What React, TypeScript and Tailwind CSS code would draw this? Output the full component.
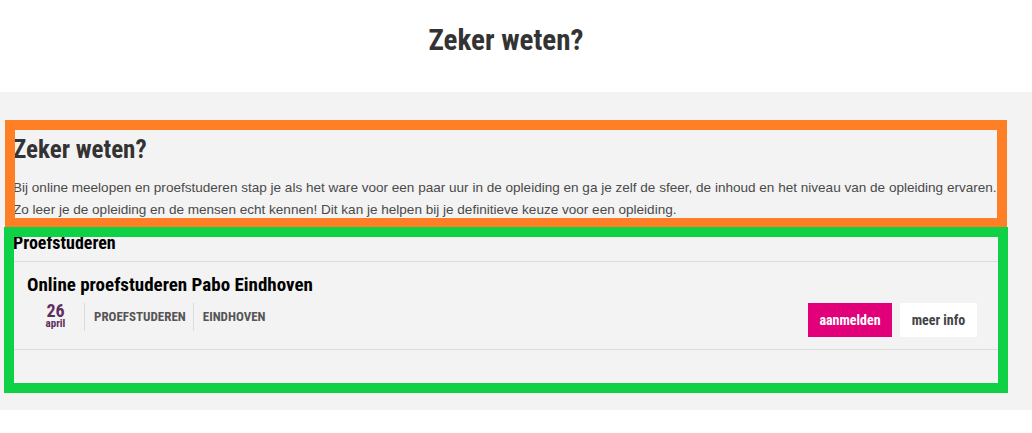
const App = () => {
  return (
    <main className="relative w-[1032px] bg-white font-['Liberation_Sans',Arial,sans-serif]">
      <header className="h-[92px] flex justify-center pt-[22px] pr-[20px]">
        <h1 className="font-['Roboto_Condensed',Roboto,sans-serif] font-bold text-[29px] leading-[36px] text-[#333]">
          Zeker weten?
        </h1>
      </header>

      <section className="relative h-[318px] bg-[#f3f3f3] pl-[13px] pr-[24px] pt-[43px]">
        <h2 className="font-['Roboto_Condensed',Roboto,sans-serif] font-bold text-[25px] leading-[30px] text-[#333]">
          Zeker weten?
        </h2>
        <p className="mt-[12px] text-[13.55px] leading-[22px] text-[#4a4a4a]">
          Bij online meelopen en proefstuderen stap je als het ware voor een paar uur in de opleiding en ga je zelf de sfeer, de inhoud en het niveau van de opleiding ervaren. Zo leer je de opleiding en de mensen echt kennen! Dit kan je helpen bij je definitieve keuze voor een opleiding.
        </p>

        <h3 className="mt-[11px] font-['Roboto_Condensed',Roboto,sans-serif] font-bold text-[18px] leading-[22px] text-black">
          Proefstuderen
        </h3>
        <div className="mt-[7px] mr-[10px] border-t border-b border-[#dcdcdc] pl-[14px] pr-[21px] pt-[11px] pb-[12px]">
          <h4 className="font-['Roboto_Condensed',Roboto,sans-serif] font-bold text-[19px] leading-[24px] text-black">
            Online proefstuderen Pabo Eindhoven
          </h4>
          <div className="mt-[6px] flex items-start justify-between">
            <div className="flex items-start font-['Roboto_Condensed',Roboto,sans-serif]">
              <div className="w-[57px] flex flex-col items-center text-[#5e2d5e] font-bold">
                <span className="text-[18px] leading-[15px]">26</span>
                <span className="text-[11px] leading-[11px]">april</span>
              </div>
              <div className="h-[28px] border-l border-[#dcdcdc] pl-[9px] pr-[7px] pt-[7px] text-[13px] leading-[14px] font-bold text-[#555] uppercase">
                Proefstuderen
              </div>
              <div className="h-[28px] border-l border-[#dcdcdc] pl-[9px] pt-[7px] text-[13px] leading-[14px] font-bold text-[#555] uppercase">
                Eindhoven
              </div>
            </div>
            <div className="flex gap-[8px] font-['Roboto_Condensed',Roboto,sans-serif] font-bold text-[14px]">
              <button className="h-[34px] w-[84px] bg-[#e2007a] text-white">aanmelden</button>
              <button className="h-[34px] w-[77px] bg-white text-[#444]">meer info</button>
            </div>
          </div>
        </div>

        <div className="absolute left-[5px] top-[28px] w-[1002px] h-[108px] border-[10px] border-[#ff7f27]" />
        <div className="absolute left-[4px] top-[135px] w-[1004px] h-[166px] border-[10px] border-[#0ed145]" />
      </section>
    </main>
  );
};

export default App;
